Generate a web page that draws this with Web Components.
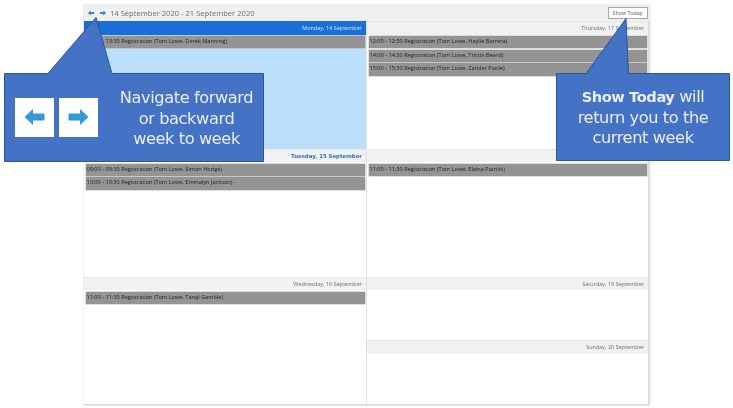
<!DOCTYPE html>
<html>
<head>
<meta charset="utf-8">
<style>
html, body { margin: 0; padding: 0; background: #fff; }
body { width: 733px; height: 408px; overflow: hidden; position: relative; font-family: "Liberation Sans", sans-serif; }
</style>
</head>
<body>
<cal-app>
  <cal-toolbar slot="toolbar" title-text="14 September 2020 - 21 September 2020"></cal-toolbar>
  <cal-column slot="left">
    <day-pane label="Monday, 14 September" selected style="height:127.5px">
      <cal-event>13:00 - 13:30 Registration (Tom Lowe, Derek Manning)</cal-event>
    </day-pane>
    <day-pane label="Tuesday, 15 September" today style="height:128px">
      <cal-event>09:00 - 09:30 Registration (Tom Lowe, Simon Hodge)</cal-event>
      <cal-event>10:00 - 10:30 Registration (Tom Lowe, Emmalyn Jackson)</cal-event>
    </day-pane>
    <day-pane label="Wednesday, 16 September" style="height:127px">
      <cal-event>11:00 - 11:30 Registration (Tom Lowe, Taraji Gamble)</cal-event>
    </day-pane>
  </cal-column>
  <cal-column slot="right">
    <day-pane label="Thursday, 17 September" style="height:127.5px">
      <cal-event>12:00 - 12:30 Registration (Tom Lowe, Haylie Barrera)</cal-event>
      <cal-event>14:00 - 14:30 Registration (Tom Lowe, Tristin Beard)</cal-event>
      <cal-event>15:00 - 15:30 Registration (Tom Lowe, Zander Poole)</cal-event>
    </day-pane>
    <day-pane label="Friday, 18 September" style="height:128px">
      <cal-event>11:00 - 11:30 Registration (Tom Lowe, Elaina Patrick)</cal-event>
    </day-pane>
    <day-pane label="Saturday, 19 September" style="height:63.5px"></day-pane>
    <day-pane label="Sunday, 20 September" style="height:63.5px"></day-pane>
  </cal-column>
</cal-app>

<call-out left="4" top="17" width="260" height="145" d="M0.5 56.5H44L92 0.5L108 56.5H259.5V144.5H0.5Z" pad="71px 10px 0 115px">
  <nav-arrows slot="before"></nav-arrows>
  Navigate forward<br>or backward<br>week to week
</call-out>
<call-out left="556" top="18" width="174" height="143" d="M0.5 55.5H30L70 0.5L72.5 55.5H173.5V142.5H0.5Z" pad="69px 6px 0 6px">
  <b>Show Today</b> will<br>return you to the<br>current week
</call-out>

<script>
class CalApp extends HTMLElement {
  constructor() {
    super();
    this.attachShadow({ mode: "open" }).innerHTML = `
<style>
:host { display: block; width: 568px; margin: 4px 0 0 83px; background: #f0f0f0; filter: blur(.3px); }
.grid { display: grid; grid-template-columns: 283px 282px; margin-left: 1px; width: 565px;
  border-bottom: 1px solid #dcdcdc; box-shadow: 1px 1px 0 #e4e4e4; }
</style>
<slot name="toolbar"></slot>
<div class="grid"><slot name="left"></slot><slot name="right"></slot></div>`;
  }
}

class CalToolbar extends HTMLElement {
  constructor() {
    super();
    this.attachShadow({ mode: "open" }).innerHTML = `
<style>
:host { display: flex; align-items: center; height: 17px; box-sizing: border-box; padding: 0 3.5px 0 5px; }
svg { display: block; }
.nav { display: flex; gap: 5.5px; margin-right: 4.5px; }
.title { flex: 1; font: 7.6px "Open Sans", sans-serif; color: #6e6e6e; white-space: nowrap; }
button { all: unset; box-sizing: border-box; width: 40px; height: 12px; margin-top: 1px; background: #fff; border: 1px solid #a8a8a8;
  font: 5.3px "Open Sans", sans-serif; color: #555; text-align: center; line-height: 10px; }
</style>
<div class="nav">
  <svg width="6" height="6" viewBox="0 0 6 6"><path d="M0 3L2.6.6V2H6V4H2.6V5.4Z" fill="#2e86d0"/></svg>
  <svg width="6" height="6" viewBox="0 0 6 6"><path d="M6 3L3.4.6V2H0V4H3.4V5.4Z" fill="#2e86d0"/></svg>
</div>
<div class="title"></div>
<button>Show Today</button>`;
    this.shadowRoot.querySelector(".title").textContent = this.getAttribute("title-text");
  }
}

class CalColumn extends HTMLElement {
  constructor() {
    super();
    this.attachShadow({ mode: "open" }).innerHTML = `
<style>
:host { display: flex; flex-direction: column; background: #fff; }
:host([slot="left"]) { border-right: 1px solid #e2e2e2; }
:host([slot="right"]) { border-right: 1px solid #dcdcdc; }
</style>
<slot></slot>`;
  }
}

class DayPane extends HTMLElement {
  constructor() {
    super();
    this.attachShadow({ mode: "open" }).innerHTML = `
<style>
:host { display: flex; flex-direction: column; box-sizing: border-box; background: #fff; }
:host([selected]) { background: #bbdefb; }
header { height: 13.5px; flex: none; box-sizing: border-box; background: #f1f1f1; border-top: 1px solid #e6e6e6;
  font: 5.5px "Open Sans", sans-serif; color: #6e6e6e; text-align: right; line-height: 12px; padding-right: 4px; white-space: nowrap; }
:host([selected]) header { background: #1a6fd6; color: #cfe3fb; border-top-color: #1a6fd6; }
:host([today]) header { color: #2a70cc; font: bold 5.4px/12px "DejaVu Sans", sans-serif; }
.events { display: flex; flex-direction: column; gap: 1.3px; padding: 1.5px 1px 0 1.5px; }
</style>
<header></header>
<div class="events"><slot></slot></div>`;
    this.shadowRoot.querySelector("header").textContent = this.getAttribute("label");
  }
}

class CalEvent extends HTMLElement {
  constructor() {
    super();
    this.attachShadow({ mode: "open" }).innerHTML = `
<style>
:host { display: block; height: 12.4px; background: #949494; color: #1f1f1f; padding-left: 1px;
  font: 5.6px "Open Sans", sans-serif; line-height: 10px; white-space: nowrap; overflow: hidden; box-shadow: 0 0 0 .4px #aaa; }
</style>
<slot></slot>`;
  }
}

class CallOut extends HTMLElement {
  constructor() {
    super();
    const a = (n) => this.getAttribute(n);
    this.attachShadow({ mode: "open" }).innerHTML = `
<style>
:host { display: block; position: absolute; left: ${a("left")}px; top: ${a("top")}px; width: ${a("width")}px; height: ${a("height")}px;
  color: #e9eef8; font: 16.2px/20.5px "DejaVu Sans", sans-serif; letter-spacing: -.025em; filter: blur(.3px); }
svg { position: absolute; left: 0; top: 0; }
.text { position: relative; box-sizing: border-box; height: 100%; padding: ${a("pad")}; text-align: center; white-space: nowrap; }
::slotted(b) { font-size: 14.6px; }
</style>
<svg width="${a("width")}" height="${a("height")}"><path d="${a("d")}" fill="#4472c4" stroke="#2f5597"/></svg>
<slot name="before"></slot>
<div class="text"><slot></slot></div>`;
  }
}

class NavArrows extends HTMLElement {
  constructor() {
    super();
    const box = (d) => `<div><svg width="39" height="39" viewBox="0 0 39 39"><path d="${d}" fill="#3498db"/></svg></div>`;
    this.attachShadow({ mode: "open" }).innerHTML = `
<style>
:host { display: flex; gap: 5px; position: absolute; left: 11px; top: 81px; z-index: 1; }
div { width: 39px; height: 39px; background: #fff; }
svg { display: block; }
</style>
${box("M9.5 19L18 11V15.5H29.5V22.5H18V27Z")}${box("M29.5 19L21 11V15.5H9.5V22.5H21V27Z")}`;
  }
}

customElements.define("cal-app", CalApp);
customElements.define("cal-toolbar", CalToolbar);
customElements.define("cal-column", CalColumn);
customElements.define("day-pane", DayPane);
customElements.define("cal-event", CalEvent);
customElements.define("call-out", CallOut);
customElements.define("nav-arrows", NavArrows);
</script>
</body>
</html>
